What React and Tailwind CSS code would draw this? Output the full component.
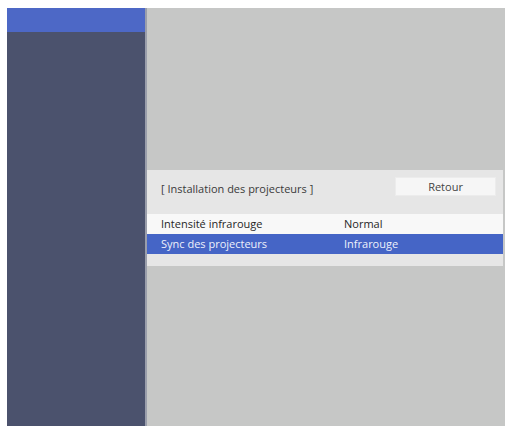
export default function App() {
  return (
    <div
      className="flex h-[426px] w-[507px] bg-white pl-[7px] pr-[2px] pt-[8px]"
      style={{ fontFamily: '"Open Sans", "Noto Sans", sans-serif' }}
    >
      {/* Sidebar */}
      <aside className="flex w-[138px] flex-col bg-[#4b526d]">
        <div className="h-[24px] bg-[#4d68c6]" />
      </aside>
      <div className="w-[2px] bg-[#9a9eab]" />

      {/* Main area */}
      <main className="flex-1 bg-[#c6c7c6] pr-[2px] pt-[162px]">
        <div className="flex flex-col bg-[#e6e6e6] text-[11px]">
          <div className="flex h-[44px] items-start justify-between pl-[14px] pr-[7px] pt-[7px]">
            <span className="mt-[2px] leading-[19px] text-[#3a3a3a]">
              [ Installation des projecteurs ]
            </span>
            <button className="h-[19px] w-[101px] border border-[#ececec] bg-[#f6f6f6] text-[11px] leading-[17px] text-[#444]">
              Retour
            </button>
          </div>
          <div className="flex h-[20px] items-center bg-[#f8f8f8] pl-[14px] text-[#262626]">
            <span className="w-[183px]">Intensité infrarouge</span>
            <span>Normal</span>
          </div>
          <div className="flex h-[20px] items-center bg-[#4565c6] pl-[14px] text-[#eef1fb]">
            <span className="w-[183px]">Sync des projecteurs</span>
            <span>Infrarouge</span>
          </div>
          <div className="h-[12px]" />
        </div>
      </main>
    </div>
  );
}
